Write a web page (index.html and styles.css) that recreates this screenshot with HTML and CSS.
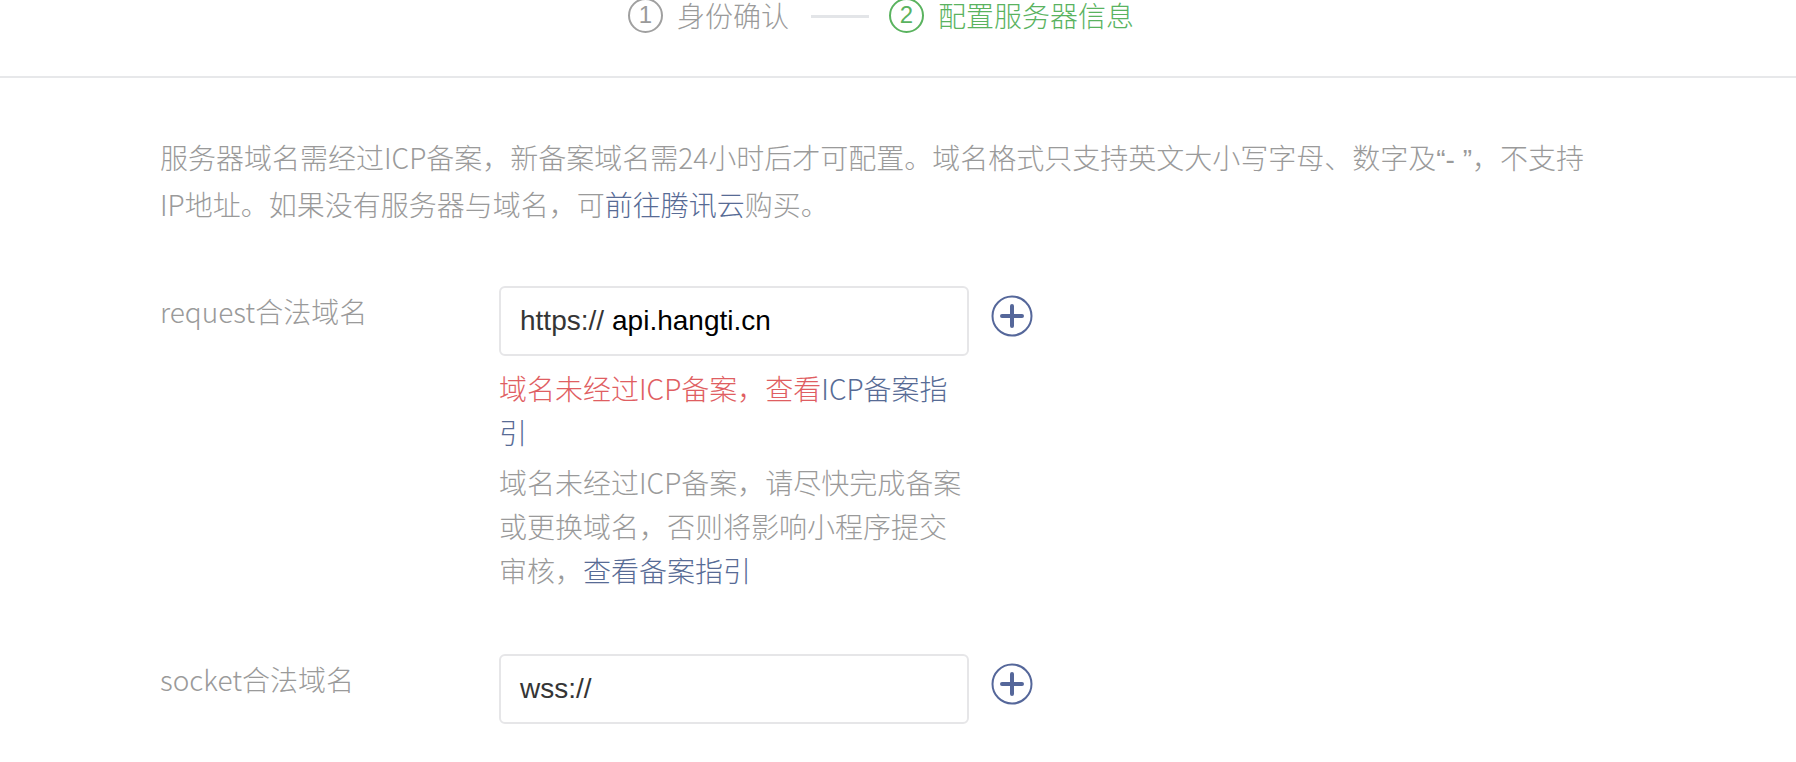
FILE: index.html
```html
<!DOCTYPE html>
<html lang="zh-CN">
<head>
    <meta charset="UTF-8">
    <meta name="viewport" content="width=device-width, initial-scale=1.0">
    <title>配置服务器信息</title>
    <link rel="stylesheet" href="styles.css">
</head>
<body>

<!-- Step bar -->
<div class="steps">
    <div class="step">
        <span class="step-num">1</span>
        <span class="step-name">身份确认</span>
    </div>
    <span class="step-line"></span>
    <div class="step step-current">
        <span class="step-num">2</span>
        <span class="step-name">配置服务器信息</span>
    </div>
</div>

<div class="main">
    <p class="desc">
        服务器域名需经过ICP备案，新备案域名需24小时后才可配置。域名格式只支持英文大小写字母、数字及<span class="latin">“- ”</span>，不支持<br>
        IP地址。如果没有服务器与域名，可<a href="#" class="link">前往腾讯云</a>购买。
    </p>

    <!-- request domain -->
    <div class="form-row">
        <label class="form-label">request合法域名</label>
        <div class="form-field">
            <div class="input-box">
                <span class="prefix">https://</span>
                <input class="input" type="text" value="api.hangti.cn">
            </div>
            <div class="tips">
                <div class="tips-error">域名未经过ICP备案，查看<a href="#" class="link">ICP备案指<br>引</a></div>
                <div class="tips-hint">域名未经过ICP备案，请尽快完成备案<br>或更换域名，否则将影响小程序提交<br>审核，<a href="#" class="link">查看备案指引</a></div>
            </div>
        </div>
        <a href="#" class="btn-add" title="添加">
            <svg width="42" height="42" viewBox="0 0 42 42">
                <circle cx="21" cy="21" r="19.5" fill="none" stroke="#55679a" stroke-width="2"/>
                <path d="M21 11v20M11 21h20" stroke="#55679a" stroke-width="4" stroke-linecap="round"/>
            </svg>
        </a>
    </div>

    <!-- socket domain -->
    <div class="form-row">
        <label class="form-label">socket合法域名</label>
        <div class="form-field">
            <div class="input-box">
                <span class="prefix">wss://</span>
                <input class="input" type="text" value="">
            </div>
        </div>
        <a href="#" class="btn-add" title="添加">
            <svg width="42" height="42" viewBox="0 0 42 42">
                <circle cx="21" cy="21" r="19.5" fill="none" stroke="#55679a" stroke-width="2"/>
                <path d="M21 11v20M11 21h20" stroke="#55679a" stroke-width="4" stroke-linecap="round"/>
            </svg>
        </a>
    </div>
</div>

</body>
</html>
```

FILE: styles.css
```css
body {
    margin: 0;
    background: #fff;
    font-family: "Noto Sans CJK SC", sans-serif;
    font-size: 28px;
    font-weight: 300;
    color: #9a9a9a;
}

a {
    text-decoration: none;
}

.link {
    color: #576b95;
}

.latin {
    font-family: "Liberation Sans", sans-serif;
}

/* Step bar at the top */
.steps {
    display: flex;
    align-items: center;
    justify-content: center;
    height: 30px;
    padding: 0 34px 46px 0;
    border-bottom: 2px solid #e7e8ea;
}
.step {
    display: flex;
    align-items: center;
    gap: 14px;
    color: #9a9a9a;
}
.step-num {
    display: flex;
    align-items: center;
    justify-content: center;
    width: 35px;
    height: 35px;
    box-sizing: border-box;
    border: 2px solid #a0a0a0;
    border-radius: 50%;
    font-family: "Liberation Sans", sans-serif;
    font-size: 24px;
    line-height: 1;
}
.step-name {
    line-height: 28px;
}
.step-line {
    width: 58px;
    height: 3px;
    margin: 2px 20px 0 22px;
    background: #e3e5e8;
}
.step-current {
    color: #5ab35f;
}
.step-current .step-num {
    border-color: #5ab35f;
}

/* Main content */
.main {
    padding: 0 160px;
}
.desc {
    margin: 57px 0 60px;
    line-height: 44px;
}

.form-row {
    display: flex;
    align-items: flex-start;
    margin-bottom: 62px;
}
.form-label {
    width: 339px;
    padding-top: 3px;
    line-height: 44px;
}
.form-field {
    width: 470px;
}
.input-box {
    display: flex;
    align-items: center;
    height: 70px;
    box-sizing: border-box;
    padding: 0 19px;
    border: 2px solid #e6e6e8;
    border-radius: 6px;
    font-family: "Liberation Sans", sans-serif;
    font-size: 28px;
    font-weight: 400;
}
.prefix {
    color: #353535;
}
.input {
    flex: 1;
    min-width: 0;
    margin-left: 8px;
    padding: 0;
    border: none;
    outline: none;
    background: transparent;
    font-family: "Liberation Sans", sans-serif;
    font-size: 28px;
    color: #000;
}

.tips {
    width: 520px;
    margin-top: 10px;
    line-height: 44px;
}
.tips-error {
    color: #df5e62;
}
.tips-hint {
    margin-top: 6px;
}

.btn-add {
    display: block;
    width: 42px;
    height: 42px;
    margin: 9px 0 0 22px;
}
.btn-add svg {
    display: block;
}
```
